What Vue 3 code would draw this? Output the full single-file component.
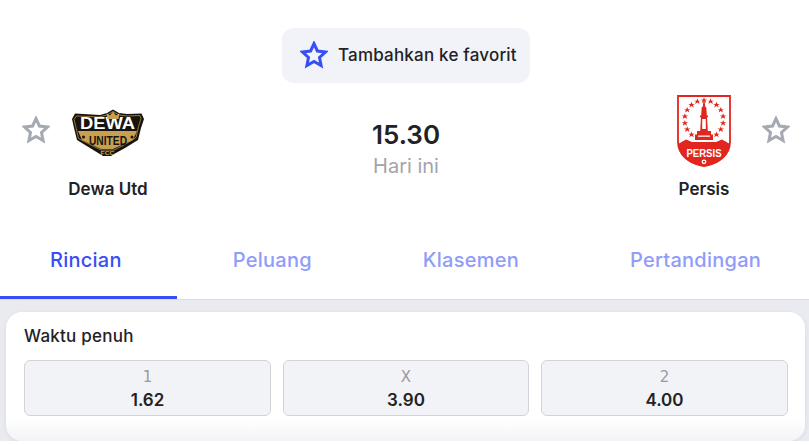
<script setup>
const starPath = 'M14 2.6l3.4 7.4 8 1-5.9 5.5 1.6 8-7.1-4-7.1 4 1.600-8L2.600 11l8-1z'
const tinyStar = 'M0-3.400 .9-1.100H3.400L1.400-.2 2.200 2.300 0 .8-2.200 2.300-1.400-.2-3.400-1.100H-.9z'
const ringStars = Array.from({ length: 15 }, (_, i) => {
  const a = ((-140 + i * 20) * Math.PI) / 180
  return { x: 36 + Math.sin(a) * 19.4, y: 25 - Math.cos(a) * 19.4 }
})
const tabs = ['Rincian', 'Peluang', 'Klasemen', 'Pertandingan']
const odds = [
  { label: '1', value: '1.62' },
  { label: 'X', value: '3.90' },
  { label: '2', value: '4.00' },
]
</script>

<template>
  <main class="page">
    <section class="header">
      <button class="favorite" type="button">
        <svg class="star" viewBox="0 0 28 28"><path class="star-blue" :d="starPath" /></svg>
        <span>Tambahkan ke favorit</span>
      </button>

      <div class="match">
        <svg class="star side-star" viewBox="0 0 28 28"><path class="star-grey" :d="starPath" /></svg>
        <div class="team">
          <svg class="logo" viewBox="0 0 72 72">
            <path fill="#17140f" d="M3 18.500 28 20l7-2 6-3.500 6 3.500 8 1 14.500-.5L72 24l-3 9-3 12-13 8-10 5.500-4 2.500h-8l-4-2.500L18 53 5 45 2 33 0 24z" />
            <path fill="none" stroke="#c9a04f" stroke-width=".7" d="M4.500 21 27 22l8-2 6-3.500 6 3.500 8 1 13-.5 1 3-2.500 8-2.500 11-12 7.500-10 5H29l-10-5L6.500 43.500 4 32.500l-2-8z" />
            <path fill="#c9a04f" d="M6 36h59l-4 9-20 9H29L10 45z" />
            <text class="dewa" x="35.500" y="34" textLength="55" lengthAdjust="spacingAndGlyphs">DEWA</text>
            <path fill="#c9a04f" d="M35.500 24l-1-6 3.500 2.500 3-4 3 4 3.500-2.500-1 6z" />
            <text class="united" x="36" y="50" textLength="38" lengthAdjust="spacingAndGlyphs">UNITED</text>
            <circle cx="11.500" cy="42" r="1.500" fill="#17140f" />
            <circle cx="60" cy="42" r="1.500" fill="#17140f" />
            <text class="fc" x="35.500" y="59.500" textLength="14" lengthAdjust="spacingAndGlyphs">FCC</text>
          </svg>
          <div class="name">Dewa Utd</div>
        </div>

        <div class="score">
          <div class="time">15.30</div>
          <div class="status">Hari ini</div>
        </div>

        <div class="team">
          <svg class="logo" viewBox="0 0 72 72">
            <path fill="#fff" stroke="#e1261f" stroke-width="1.800" d="M10 1h52v46c0 13-12 22-26 24C22 69 10 60 10 47z" />
            <path fill="#e1261f" d="M10 49l8-4.500 6 2.500h24l6-2.500 8 4.500C61 62 50 70 36 71 22 70 11 62 10 49z" />
            <g fill="#e1261f">
              <path v-for="(s, i) in ringStars" :key="i" :d="tinyStar" :transform="`translate(${s.x} ${s.y})`" />
              <path d="M35.300 7h1.400l.6 5h1l.5 8.500h1.200v1.800h-1l.8 13.700h-7.600l.8-13.700h-1v-1.800h1.200l.5-8.500h1z" />
              <path d="M29 36h14v3.500h2v5.500H27v-5.500h2z" />
            </g>
            <path fill="#fff" d="M30 40.500h12v1.200H30zM34.200 24h3.600v10h-3.600z" />
            <text class="persis" x="36" y="61.500" textLength="35" lengthAdjust="spacingAndGlyphs">PERSIS</text>
            <circle cx="36" cy="66.800" r="2.400" fill="#fff" />
            <circle cx="36" cy="66.800" r="1.100" fill="#e1261f" />
          </svg>
          <div class="name">Persis</div>
        </div>
        <svg class="star side-star" viewBox="0 0 28 28"><path class="star-grey" :d="starPath" /></svg>
      </div>
    </section>

    <nav class="tabs">
      <div v-for="(tab, i) in tabs" :key="tab" class="tab" :class="{ active: i === 0 }">{{ tab }}</div>
    </nav>

    <section class="body">
      <div class="card">
        <h2>Waktu penuh</h2>
        <div class="odds">
          <div v-for="o in odds" :key="o.label" class="odd">
            <span class="odd-label">{{ o.label }}</span>
            <span class="odd-value">{{ o.value }}</span>
          </div>
        </div>
      </div>
    </section>
  </main>
</template>

<style>
html, body { margin: 0; background: #fff; }
</style>

<style scoped>
.page {
  width: 809px;
  height: 441px;
  overflow: hidden;
  font-family: Inter, "Noto Sans", sans-serif;
  color: #222226;
  background: #fff;
}
.header { padding-top: 28px; display: flex; flex-direction: column; align-items: center; }
.favorite {
  width: 248px;
  height: 55px;
  margin-left: 3px;
  box-sizing: border-box;
  padding: 0 0 2px 18px;
  border: 0;
  border-radius: 12px;
  background: #f1f3f8;
  display: flex;
  align-items: center;
  gap: 10px;
  font: 500 17px Inter, sans-serif;
  letter-spacing: 0.2px;
  color: #222226;
  white-space: nowrap;
}
.star { width: 28px; height: 28px; flex: none; }
.star-blue, .star-grey { fill: none; stroke-width: 3; stroke-linejoin: miter; }
.star-blue { stroke: #374df5; }
.star-grey { stroke: #a4a9b3; }
.match {
  align-self: stretch;
  margin-top: 12px;
  padding: 0 19px 0 22px;
  display: flex;
  align-items: flex-start;
}
.side-star { margin-top: 21px; }
.team { width: 116px; display: flex; flex-direction: column; align-items: center; }
.logo { width: 72px; height: 72px; display: block; }
.name { margin-top: 12px; font-size: 17px; line-height: 20px; font-weight: 600; white-space: nowrap; }
.score { flex: 1; padding-top: 25px; text-align: center; }
.time { font-size: 26px; line-height: 30px; font-weight: 600; }
.status { font-size: 20px; line-height: 26px; color: #a4a4a9; margin-top: 3px; }
.dewa { font: 900 16px "Liberation Sans", sans-serif; fill: #fff; text-anchor: middle; }
.united { font: 700 13px "Liberation Sans", sans-serif; fill: #17140f; text-anchor: middle; }
.fc { font: 700 5px "Liberation Sans", sans-serif; fill: #c9a04f; text-anchor: middle; }
.persis { font: 700 11.500px "Liberation Sans", sans-serif; fill: #fff; text-anchor: middle; }
.tabs {
  margin-top: 23px;
  height: 78px;
  box-sizing: border-box;
  border-bottom: 1px solid #dcdde0;
  display: flex;
  overflow: hidden;
}
.tab {
  flex: none;
  padding: 0 55.5px;
  height: 77px;
  box-sizing: border-box;
  line-height: 76px;
  font-size: 20px;
  font-weight: 500;
  letter-spacing: 0.25px;
  color: #8f9cf9;
  white-space: nowrap;
}
.tab.active {
  padding-left: 50px;
  color: #374df5;
  border-bottom: 3px solid #374df5;
}
.body { background: #e9ebf0; padding: 12px 4px 0 6px; height: 141px; box-sizing: border-box; }
.card {
  height: 129px;
  box-sizing: border-box;
  padding: 14px 18px 0;
  border-radius: 16px;
  background: linear-gradient(#fff 0, #fff 108px, #f2f3f5 129px);
  box-shadow: 0 1px 4px rgba(34, 34, 38, 0.08);
}
h2 { margin: 0; font-size: 17px; line-height: 20px; font-weight: 500; letter-spacing: 0.25px; }
.odds { margin-top: 14px; display: grid; grid-template-columns: 247px 246px 247px; gap: 12px; }
.odd {
  height: 56px;
  box-sizing: border-box;
  border: 1px solid #d1d3d9;
  border-radius: 6px;
  background: #f1f3f7;
  display: flex;
  flex-direction: column;
  align-items: center;
  justify-content: center;
  gap: 3px;
}
.odd-label { font: 15px/20px "DejaVu Sans", sans-serif; color: #9a9a9f; }
.odd-value { font-size: 17px; line-height: 20px; font-weight: 600; color: #222226; }
</style>
